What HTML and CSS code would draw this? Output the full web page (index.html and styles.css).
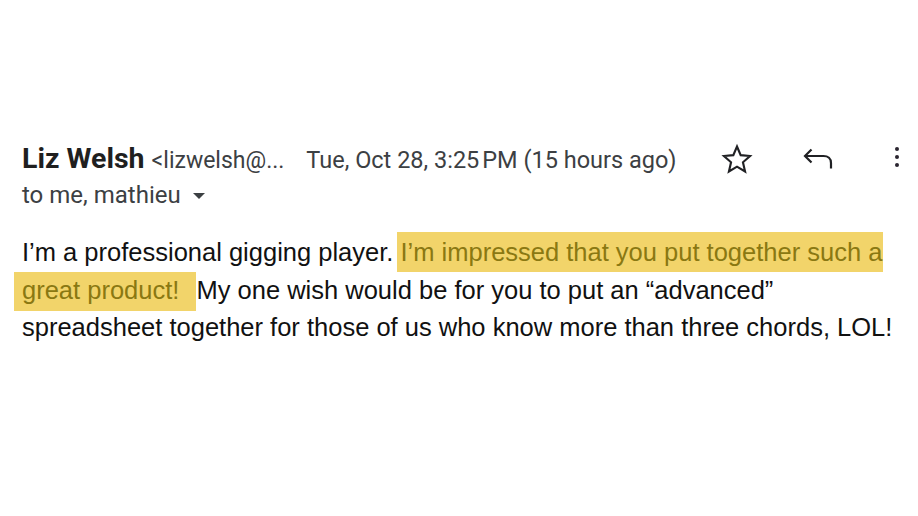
FILE: index.html
```html
<!DOCTYPE html>
<html>
<head>
<meta charset="utf-8">
<link rel="stylesheet" href="styles.css">
</head>
<body>
<div class="mail">
  <div class="header">
    <span class="name">Liz Welsh</span>
    <span class="addr">&lt;lizwelsh@...</span>
    <span class="date">Tue, Oct 28, 3:25&#8239;PM (15 hours ago)</span>
    <div class="icons">
      <svg class="icon star" viewBox="0 0 24 24" width="34" height="34"><path d="M12 3.2l2.6 6.1 6.6.6-5 4.4 1.5 6.5L12 17.4l-5.7 3.4 1.5-6.5-5-4.4 6.6-.6z" fill="none" stroke="#202124" stroke-width="1.5" stroke-linejoin="miter"/></svg>
      <svg class="icon reply" viewBox="0 0 32 22" width="32" height="22"><path d="M9.5 1.5L3 8l6.5 6.5M3 8h18.5c4.5 0 7.5 2.6 7.5 7v5.5" fill="none" stroke="#202124" stroke-width="2.2"/></svg>
      <svg class="icon more" viewBox="0 0 10 24" width="10" height="24"><circle cx="5" cy="4" r="2" fill="#2a2530"/><circle cx="5" cy="12" r="2" fill="#2a2530"/><circle cx="5" cy="20" r="2" fill="#2a2530"/></svg>
    </div>
  </div>
  <div class="to">to me, mathieu <span class="caret"></span></div>
  <p class="body">I’m a professional gigging player. <span class="hl hl1">I’m impressed that you put together such a</span><br><span class="hl hl2">great product!&nbsp;</span>My one wish would be for you to put an “advanced”<br>spreadsheet together for those of us who know more than three chords, LOL!</p>
</div>
</body>
</html>
```
FILE: styles.css
```css
html, body {
  margin: 0;
  padding: 0;
  background: #ffffff;
}
.mail {
  width: 918px;
  height: 516px;
  box-sizing: border-box;
  padding: 139px 0 0 22px;
  font-family: Roboto, "Liberation Sans", sans-serif;
  color: #202124;
}
.header {
  display: flex;
  align-items: baseline;
  height: 40px;
  line-height: 40px;
}
.name {
  font-size: 28.5px;
  font-weight: 700;
  color: #1f1f1f;
}
.addr {
  margin-left: 7px;
  font-size: 23px;
  color: #3c4043;
}
.date {
  margin-left: 22px;
  font-size: 23.5px;
  color: #3c4043;
}
.icons {
  display: flex;
  align-items: center;
  align-self: center;
  margin-left: auto;
  margin-right: 16px;
}
.star {
  margin-right: 48px;
}
.reply {
  margin-right: 58px;
}
.more {
  margin-top: -4px;
}
.to {
  font-size: 24px;
  line-height: 30px;
  color: #3c4043;
  margin-top: 1px;
  display: flex;
  align-items: center;
}
.caret {
  display: inline-block;
  width: 0;
  height: 0;
  border-left: 6px solid transparent;
  border-right: 6px solid transparent;
  border-top: 6px solid #3c4043;
  margin-left: 12px;
  margin-top: 2px;
}
.body {
  margin: 24px 0 0 0;
  font-family: "Liberation Sans", Arial, sans-serif;
  font-size: 25.5px;
  line-height: 37.5px;
  color: #111111;
  white-space: nowrap;
}
.hl {
  background: #f2d46a;
  color: #8a7812;
}
.hl1 {
  padding: 6px 1px 6px 3px;
  margin-left: -3px;
}
.hl2 {
  padding: 4px 10px 7px 8px;
  margin-left: -8px;
}
```
